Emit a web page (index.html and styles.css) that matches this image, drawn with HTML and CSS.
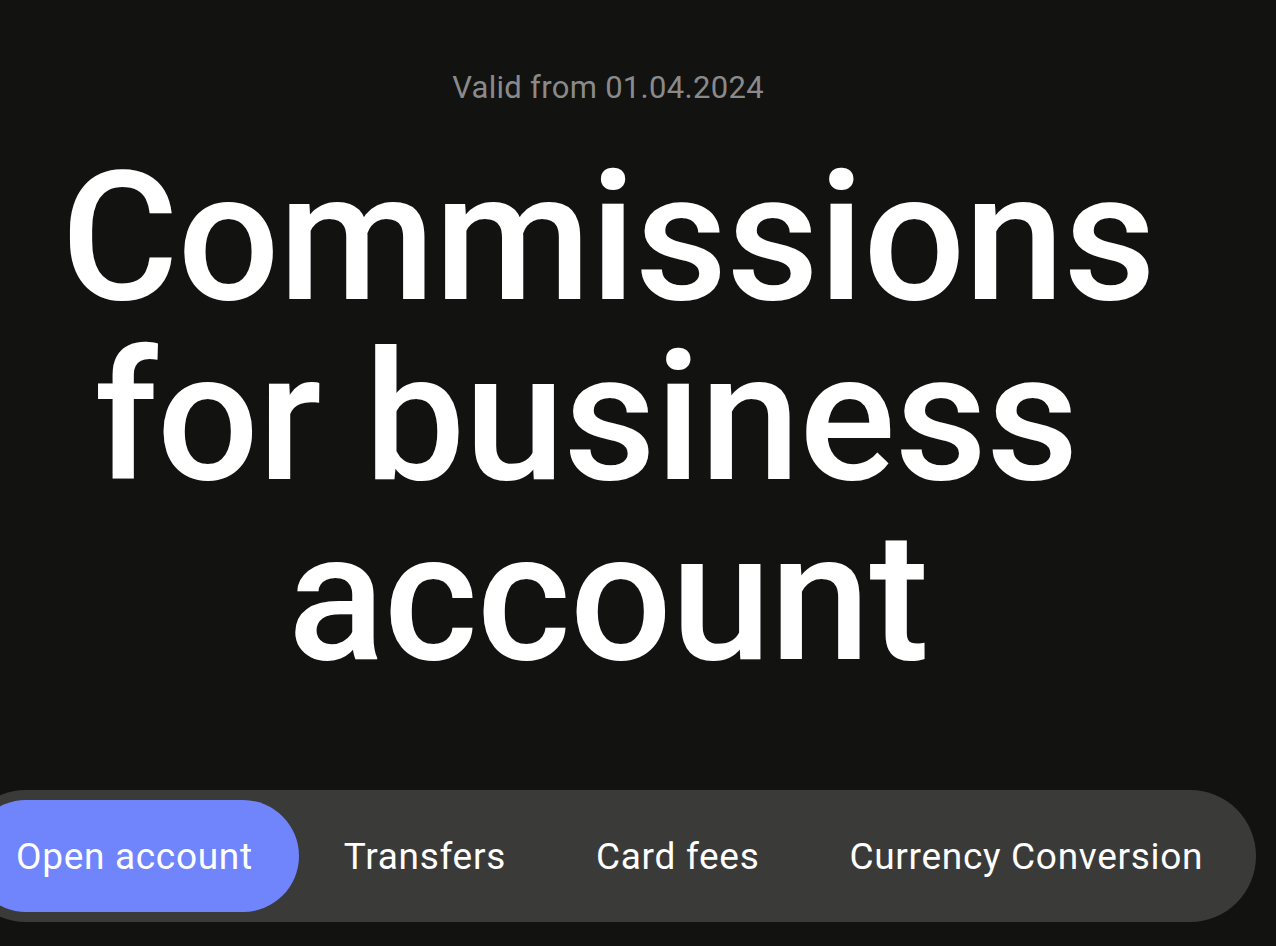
FILE: index.html
```html
<!DOCTYPE html>
<html lang="en">
<head>
<meta charset="utf-8">
<title>Commissions for business account</title>
<link rel="stylesheet" href="styles.css">
</head>
<body>
<main class="page">
  <p class="valid">Valid from 01.04.2024</p>
  <h1 class="title">Commissions<br>for business&nbsp;<br>account</h1>
  <nav class="tabs">
    <a class="tab active" href="#">Open account</a>
    <a class="tab" href="#">Transfers</a>
    <a class="tab" href="#">Card fees</a>
    <a class="tab" href="#">Currency Conversion</a>
  </nav>
</main>
</body>
</html>
```

FILE: styles.css
```css
html, body {
  margin: 0;
  padding: 0;
  background: #121211;
  overflow: hidden;
}
body {
  font-family: Roboto, "Liberation Sans", Arial, sans-serif;
  color: #ffffff;
  height: 946px;
}
.page {
  width: 1296px;
  margin-left: -40px;
  padding-top: 69px;
  display: flex;
  flex-direction: column;
  align-items: center;
}
.valid {
  margin: 0;
  font-size: 31px;
  line-height: 37px;
  color: #8a8a8a;
  letter-spacing: 0.3px;
}
.title {
  margin: 42px 0 0;
  font-size: 180px;
  line-height: 180px;
  font-weight: 500;
  text-align: center;
  letter-spacing: -1px;
}
.tabs {
  margin-top: 102px;
  display: flex;
  align-self: stretch;
  background: #3a3a39;
  border-radius: 66px;
  padding: 10px;
  height: 112px;
}
.tab {
  display: flex;
  align-items: center;
  padding: 0 45px;
  border-radius: 56px;
  color: #ffffff;
  text-decoration: none;
  font-size: 37px;
  font-weight: 400;
  letter-spacing: 0.7px;
  white-space: nowrap;
}
.tab.active {
  background: #7085fc;
  padding-left: 46px;
  padding-right: 46px;
}
```
